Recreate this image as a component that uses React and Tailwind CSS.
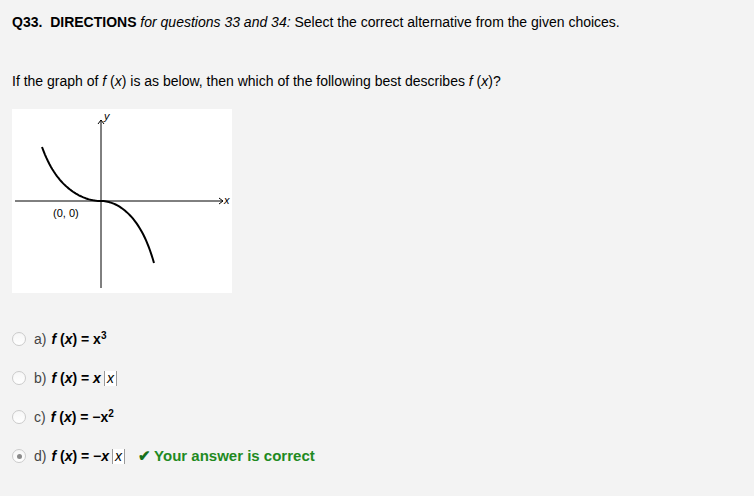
import React from 'react'

function Graph(){
  const left = []
  const right = []
  const f = t => 0.75 * t * t + 0.25 * Math.pow(t, 6)
  for(let i = 0; i <= 40; i++){
    const t = i / 40
    left.push(`${(89 - 59 * t).toFixed(2)},${(92 - 54 * f(t)).toFixed(2)}`)
    right.push(`${(89 + 53 * t).toFixed(2)},${(92 + 62 * f(t)).toFixed(2)}`)
  }
  const pts = left.reverse().concat(right.slice(1)).join(' ')
  return (
    <svg width="220" height="184" viewBox="0 0 220 184" className="block bg-white">
      <line x1="3" y1="92" x2="211" y2="92" stroke="#000" strokeWidth="1" />
      <line x1="89" y1="11" x2="89" y2="179" stroke="#000" strokeWidth="1" />
      <path d="M86 15 L89 11 L92 15" fill="none" stroke="#000" strokeWidth="1" />
      <path d="M207 89 L211 92 L207 95" fill="none" stroke="#000" strokeWidth="1" />
      <polyline points={pts} fill="none" stroke="#000" strokeWidth="2" />
      <text x="92" y="11" fontSize="11" fontStyle="italic" fontFamily="Liberation Sans, Arial, sans-serif">y</text>
      <text x="212" y="95" fontSize="11" fontStyle="italic" fontFamily="Liberation Sans, Arial, sans-serif">x</text>
      <text x="41" y="108" fontSize="11" fontFamily="Liberation Sans, Arial, sans-serif">(0, 0)</text>
    </svg>
  )
}

function Radio({ checked }){
  return (
    <span className="w-[14px] h-[14px] rounded-full border border-[#cbcbcb] bg-gradient-to-b from-[#f6f6f6] to-white flex items-center justify-center shrink-0">
      {checked && <span className="w-[5px] h-[5px] rounded-full bg-[#8a8a8a]" />}
    </span>
  )
}

function Abs(){
  return (
    <span className="inline-block h-[15px] leading-[15px] px-[2px] ml-[3px] bg-white border-l border-r border-[#9a9a9a] italic font-normal align-middle">x</span>
  )
}

function Fx(){
  return <b><i>f</i> (<i>x</i>) = </b>
}

export default function App(){
  const opts = [
    { k: 'a)', body: <><Fx /><b>x<sup className="text-[10px]">3</sup></b></> },
    { k: 'b)', body: <><Fx /><b><i>x</i></b><Abs /></> },
    { k: 'c)', body: <><Fx /><b>−x<sup className="text-[10px]">2</sup></b></> },
    { k: 'd)', body: <><Fx /><b>−<i>x</i></b><Abs /></>, checked: true },
  ]
  return (
    <div className="w-[754px] h-[496px] bg-[#f3f3f3] text-black text-[14px] leading-4 px-3 pt-[14px]" style={{ fontFamily: '"Liberation Sans", Arial, sans-serif' }}>
      <div>
        <b>Q33.&nbsp; DIRECTIONS</b> <i>for questions 33 and 34:</i> Select the correct alternative from the given choices.
      </div>
      <div className="mt-[43px]">
        If the graph of <i>f</i> (<i>x</i>) is as below, then which of the following best describes <i>f</i> (<i>x</i>)?
      </div>
      <div className="mt-[20px]">
        <Graph />
      </div>
      <div className="mt-[38px] flex flex-col gap-[23px]">
        {opts.map(o => (
          <div key={o.k} className="flex items-center h-[16px]">
            <Radio checked={o.checked} />
            <span className="ml-[8px] text-[#444] font-light">{o.k}</span>
            <span className="ml-[5px] whitespace-pre">{o.body}</span>
            {o.checked && (
              <span className="ml-[13px] flex items-center text-[#1f8a1f] font-bold text-[15px]">
                <span className="mr-[3px] text-[#17701a]">✔</span>Your answer is correct
              </span>
            )}
          </div>
        ))}
      </div>
    </div>
  )
}
